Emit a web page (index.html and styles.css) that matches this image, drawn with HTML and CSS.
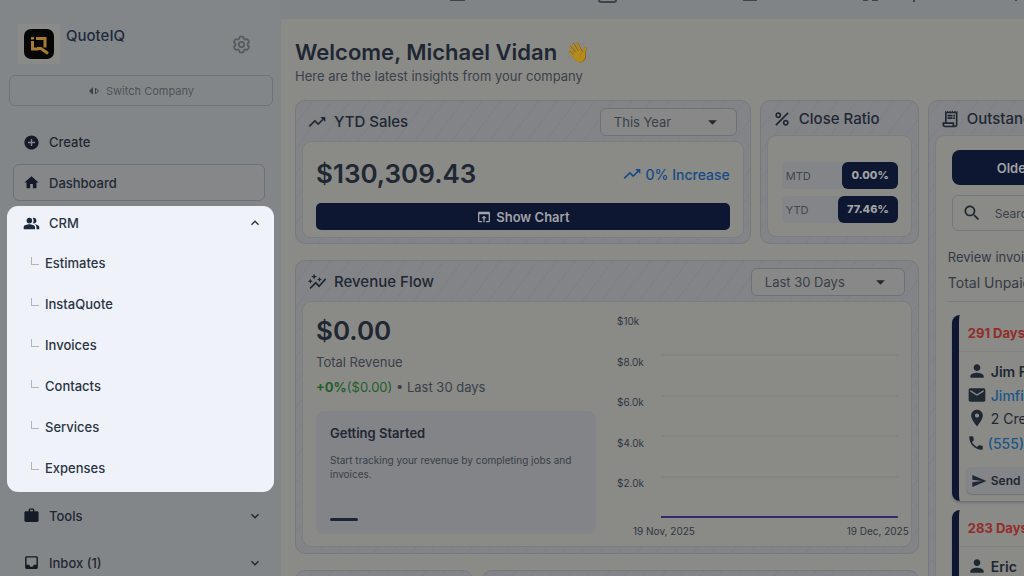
FILE: index.html
```html
<!DOCTYPE html>
<html lang="en">
<head>
  <meta charset="UTF-8" />
  <meta name="viewport" content="width=device-width, initial-scale=1" />
  <title>QuoteIQ - Dashboard</title>
  <link rel="stylesheet" href="styles.css">
</head>
<body>

  <!-- shared icons -->
  <svg class="sprite" aria-hidden="true">
    <symbol id="i-trend" viewBox="0 0 24 24"><path d="M16 6l2.29 2.29-4.88 4.88-4-4L2 16.59 3.41 18l6-6 4 4 6.3-6.29L22 12V6z"/></symbol>
    <symbol id="i-down" viewBox="0 0 24 24"><path d="M16.59 8.59L12 13.17 7.41 8.59 6 10l6 6 6-6z"/></symbol>
    <symbol id="i-caret" viewBox="0 0 24 24"><path d="M4 8l8 8 8-8z"/></symbol>
    <symbol id="i-person" viewBox="0 0 24 24"><path d="M12 12c2.21 0 4-1.79 4-4s-1.79-4-4-4-4 1.79-4 4 1.79 4 4 4zm0 2c-2.67 0-8 1.34-8 4v2h16v-2c0-2.66-5.33-4-8-4z"/></symbol>
  </svg>

  <div class="app">

    <aside class="sidebar">
      <div class="company">
        <div class="logo">
          <svg viewBox="0 0 30 30">
            <rect width="30" height="30" rx="7" fill="#060606"/>
            <g fill="none" stroke="#a67b32" stroke-width="3">
              <path d="M8.5 12v8h6"/>
              <path d="M12 9.500h9v9"/>
              <path d="M13 19.500h4l7 5"/>
            </g>
            <path d="M7 8h3v2.500H7z" fill="#a67b32"/>
          </svg>
        </div>
        <span class="company-name">QuoteIQ</span>
        <button class="settings-btn" title="Settings">
          <svg viewBox="0 0 24 24"><path d="M9.594 3.94c.09-.542.56-.94 1.11-.94h2.593c.55 0 1.02.398 1.11.94l.213 1.281c.063.374.313.686.645.87.074.04.147.083.22.127.324.196.72.257 1.075.124l1.217-.456a1.125 1.125 0 011.37.49l1.296 2.247a1.125 1.125 0 01-.26 1.431l-1.003.827c-.293.24-.438.613-.431.992a6.759 6.759 0 010 .255c-.007.378.138.75.43.99l1.005.828c.424.35.534.954.26 1.43l-1.298 2.247a1.125 1.125 0 01-1.369.491l-1.217-.456c-.355-.133-.75-.072-1.076.124a6.57 6.57 0 01-.22.128c-.331.183-.581.495-.644.869l-.213 1.28c-.09.543-.56.941-1.11.941h-2.594c-.55 0-1.02-.398-1.11-.94l-.213-1.281c-.062-.374-.312-.686-.644-.87a6.52 6.52 0 01-.22-.127c-.325-.196-.72-.257-1.076-.124l-1.217.456a1.125 1.125 0 01-1.369-.49l-1.297-2.247a1.125 1.125 0 01.26-1.431l1.004-.827c.292-.24.437-.613.43-.992a6.932 6.932 0 010-.255c.007-.378-.138-.75-.43-.99l-1.004-.828a1.125 1.125 0 01-.26-1.43l1.297-2.247a1.125 1.125 0 011.37-.491l1.216.456c.356.133.751.072 1.076-.124.072-.044.146-.087.22-.128.332-.183.582-.495.644-.869l.214-1.281z"/><circle cx="12" cy="12" r="3"/></svg>
        </button>
      </div>

      <button class="switch-btn">
        <svg viewBox="0 0 12 10"><path d="M5 1v8L1 5z" fill="currentColor"/><path d="M7.500 2v6l3-3z" fill="none" stroke="currentColor"/></svg>
        Switch Company
      </button>

      <nav>
        <a href="#" class="nav-item create">
          <svg class="icon" viewBox="0 0 24 24"><path d="M12 2C6.48 2 2 6.48 2 12s4.480 10 10 10 10-4.480 10-10S17.520 2 12 2zm5 11h-4v4h-2v-4H7v-2h4V7h2v4h4v2z"/></svg>
          Create
        </a>
        <a href="#" class="nav-item active">
          <svg class="icon" viewBox="0 0 24 24"><path d="M10 20v-6h4v6h5v-8h3L12 3 2 12h3v8z"/></svg>
          Dashboard
        </a>

        <div class="nav-group">
          <button class="nav-item group-title">
            <svg class="icon" viewBox="0 0 24 24"><path d="M16.670 13.130C18.040 14.060 19 15.320 19 17v3h4v-3c0-2.180-3.570-3.470-6.330-3.870zM15 12c2.210 0 4-1.790 4-4s-1.790-4-4-4c-.47 0-.91.1-1.330.24C14.500 5.270 15 6.580 15 8s-.5 2.730-1.330 3.760c.42.14.86.24 1.330.24zM9 12c2.210 0 4-1.790 4-4s-1.790-4-4-4-4 1.790-4 4 1.790 4 4 4zm0 1c-2.670 0-8 1.340-8 4v3h16v-3c0-2.660-5.330-4-8-4z"/></svg>
            CRM
            <svg class="chevron" viewBox="0 0 24 24"><path d="M12 8l-6 6 1.410 1.410L12 10.830l4.590 4.580L18 14z"/></svg>
          </button>
          <ul>
            <li><a href="#">Estimates</a></li>
            <li><a href="#">InstaQuote</a></li>
            <li><a href="#">Invoices</a></li>
            <li><a href="#">Contacts</a></li>
            <li><a href="#">Services</a></li>
            <li><a href="#">Expenses</a></li>
          </ul>
        </div>

        <button class="nav-item closed">
          <svg class="icon" viewBox="0 0 24 24"><path d="M20 6h-4V4c0-1.110-.89-2-2-2h-4c-1.110 0-2 .89-2 2v2H4c-1.110 0-1.990.89-1.990 2L2 19c0 1.110.89 2 2 2h16c1.110 0 2-.89 2-2V8c0-1.110-.89-2-2-2zm-6 0h-4V4h4v2z"/></svg>
          Tools
          <svg class="chevron"><use href="#i-down"/></svg>
        </button>
        <button class="nav-item closed">
          <svg class="icon" viewBox="0 0 24 24"><path d="M19 3H5c-1.100 0-2 .9-2 2v14c0 1.100.9 2 2 2h14c1.100 0 2-.9 2-2V5c0-1.100-.9-2-2-2zm0 12h-4c0 1.660-1.350 3-3 3s-3-1.340-3-3H5V5h14v10z"/></svg>
          Inbox (1)
          <svg class="chevron"><use href="#i-down"/></svg>
        </button>
      </nav>
    </aside>

    <main>
      <header class="topbar">
        <svg viewBox="0 0 742 19" width="742" height="19">
          <path d="M169 0h15M462 0h14M582 0h5M591 0h6M633 0v2M735 0v1" />
          <path d="M318 -4v4q0 2 2 2h13q2 0 2-2v-4" />
        </svg>
      </header>

      <div class="content">
        <h1>Welcome, Michael Vidan <span class="wave">👋</span></h1>
        <p class="intro">Here are the latest insights from your company</p>

        <div class="board">
          <div class="left">
            <section class="card sales">
              <div class="card-head tall">
                <svg class="head-icon"><use href="#i-trend"/></svg>
                <h2>YTD Sales</h2>
                <div class="select">
                  <select aria-label="Sales period"><option>This Year</option></select>
                  <svg><use href="#i-caret"/></svg>
                </div>
              </div>
              <div class="card-body">
                <div class="sales-row">
                  <strong class="amount">$130,309.43</strong>
                  <span class="increase"><svg><use href="#i-trend"/></svg>0% Increase</span>
                </div>
                <button class="show-chart">
                  <svg viewBox="0 0 24 24"><path d="M19 4H5c-1.110 0-2 .9-2 2v12c0 1.100.89 2 2 2h4v-2H5V8h14v10h-4v2h4c1.100 0 2-.9 2-2V6c0-1.100-.89-2-2-2zm-7 6l-4 4h3v6h2v-6h3l-4-4z"/></svg>
                  Show Chart
                </button>
              </div>
            </section>

            <section class="card ratio">
              <div class="card-head">
                <svg class="head-icon" viewBox="0 0 24 24"><path d="M7.500 11C9.430 11 11 9.430 11 7.500S9.430 4 7.500 4 4 5.570 4 7.500 5.570 11 7.500 11zm0-5C8.330 6 9 6.670 9 7.500S8.330 9 7.500 9 6 8.330 6 7.500 6.670 6 7.500 6zM4 18.580L18.580 4 20 5.420 5.420 20zM16.500 13c-1.930 0-3.500 1.570-3.500 3.500s1.570 3.500 3.500 3.500 3.500-1.570 3.500-3.500-1.570-3.500-3.500-3.500zm0 5c-.83 0-1.500-.67-1.500-1.500s.67-1.500 1.500-1.500 1.500.67 1.500 1.500-.67 1.500-1.500 1.500z"/></svg>
                <h2>Close Ratio</h2>
              </div>
              <div class="card-body">
                <div class="ratio-row"><span>MTD</span><b>0.00%</b></div>
                <div class="ratio-row"><span>YTD</span><b>77.46%</b></div>
              </div>
            </section>

            <section class="card revenue">
              <div class="card-head tall">
                <svg class="head-icon" viewBox="0 0 24 24"><path d="M14.060 9.940L12 9l2.060-.94L15 6l.94 2.060L18 9l-2.060.94L15 12l-.94-2.060zM4 14l.94-2.060L7 11l-2.060-.94L4 8l-.94 2.060L1 11l2.060.94L4 14zm4.500-5l1.090-2.410L12 5.500 9.590 4.410 8.500 2 7.410 4.410 5 5.500l2.410 1.090L8.500 9zm-4 11.500l6-6.010 4 4L23 8.930l-1.410-1.410-7.090 7.970-4-4L3 19l1.500 1.500z"/></svg>
                <h2>Revenue Flow</h2>
                <div class="select wide">
                  <select aria-label="Revenue period"><option>Last 30 Days</option></select>
                  <svg><use href="#i-caret"/></svg>
                </div>
              </div>
              <div class="card-body">
                <div class="totals">
                  <strong class="amount">$0.00</strong>
                  <p>Total Revenue</p>
                  <p class="change"><span><b>+0%</b>($0.00)</span> • Last 30 days</p>
                  <div class="started">
                    <h3>Getting Started</h3>
                    <p>Start tracking your revenue by completing jobs and invoices.</p>
                    <i></i>
                  </div>
                </div>
                <div class="chart">
                  <div class="y-axis"><span>$10k</span><span>$8.0k</span><span>$6.0k</span><span>$4.0k</span><span>$2.0k</span></div>
                  <svg class="plot">
                    <g class="grid-lines">
                      <line x1="0" x2="100%" y1="40" y2="40"/>
                      <line x1="0" x2="100%" y1="81" y2="81"/>
                      <line x1="0" x2="100%" y1="121" y2="121"/>
                      <line x1="0" x2="100%" y1="162" y2="162"/>
                    </g>
                    <line class="series" x1="0" x2="100%" y1="202" y2="202"/>
                  </svg>
                  <div class="x-axis"><span>19 Nov, 2025</span><span>19 Dec, 2025</span></div>
                </div>
              </div>
            </section>

            <div class="next-row">
              <section class="card"></section>
              <section class="card"></section>
            </div>
          </div>

          <section class="card outstanding">
            <div class="card-head">
              <svg class="head-icon" viewBox="0 0 24 24"><path d="M19.500 3.500L18 2l-1.500 1.500L15 2l-1.500 1.500L12 2l-1.500 1.500L9 2 7.500 3.500 6 2v14H3v3c0 1.660 1.340 3 3 3h12c1.660 0 3-1.340 3-3V2l-1.500 1.500zM15 20H6c-.55 0-1-.45-1-1v-1h10v2zm4-1c0 .55-.45 1-1 1s-1-.45-1-1v-3H8V5h11v14zM9 7h6v2H9zM16 7h2v2h-2zM9 10h6v2H9zM16 10h2v2h-2z"/></svg>
              <h2>Outstanding</h2>
            </div>
            <div class="card-body">
              <button class="sort-btn">Oldest First</button>
              <label class="search">
                <svg viewBox="0 0 24 24"><path d="M15.500 14h-.79l-.28-.27C15.410 12.590 16 11.110 16 9.500 16 5.910 13.090 3 9.500 3S3 5.910 3 9.500 5.910 16 9.500 16c1.610 0 3.090-.59 4.230-1.570l.27.28v.79l5 4.990L20.490 19l-4.990-5zm-6 0C7.010 14 5 11.990 5 9.500S7.010 5 9.500 5 14 7.010 14 9.500 11.990 14 9.500 14z"/></svg>
                <input type="text" placeholder="Search" aria-label="Search">
              </label>
              <p class="review">Review invoices</p>
              <p class="unpaid">Total Unpaid</p>

              <article class="invoice">
                <h3>291 Days</h3>
                <div class="customer">
                  <p class="name"><svg><use href="#i-person"/></svg>Jim Fish</p>
                  <p class="mail"><svg viewBox="0 0 24 24"><path d="M20 4H4c-1.100 0-2 .9-2 2v12c0 1.100.9 2 2 2h16c1.100 0 2-.9 2-2V6c0-1.100-.9-2-2-2zm0 4l-8 5-8-5V6l8 5 8-5v2z"/></svg><a href="#">Jimfish</a></p>
                  <p class="address"><svg viewBox="0 0 24 24"><path d="M12 2C8.130 2 5 5.130 5 9c0 5.250 7 13 7 13s7-7.750 7-13c0-3.870-3.130-7-7-7zm0 9.500c-1.380 0-2.500-1.120-2.500-2.500s1.120-2.500 2.500-2.500 2.500 1.120 2.500 2.500-1.120 2.500-2.500 2.500z"/></svg>2 Creek</p>
                  <p class="phone"><svg viewBox="0 0 24 24"><path d="M20 15.500c-1.250 0-2.450-.2-3.570-.57-.35-.11-.74-.03-1.020.24l-2.200 2.200c-2.830-1.440-5.150-3.750-6.590-6.590l2.200-2.210c.28-.26.36-.65.25-1C8.700 6.450 8.500 5.250 8.500 4c0-.55-.45-1-1-1H4c-.55 0-1 .45-1 1 0 9.390 7.610 17 17 17 .55 0 1-.45 1-1v-3.500c0-.55-.45-1-1-1z"/></svg><a href="#">(555)</a></p>
                </div>
                <button class="send-btn"><svg viewBox="0 0 24 24"><path d="M2 21L23 12 2 3v7l15 2-15 2z"/></svg>Send Reminder</button>
              </article>

              <article class="invoice">
                <h3>283 Days</h3>
                <div class="customer">
                  <p class="name"><svg><use href="#i-person"/></svg>Eric</p>
                </div>
              </article>
            </div>
          </section>
        </div>
      </div>
    </main>
  </div>

</body>
</html>
```
FILE: styles.css
```css
* {
  box-sizing: border-box;
}

body {
  margin: 0;
  height: 100vh;
  overflow: hidden;
  font-family: Inter, "Liberation Sans", sans-serif;
  font-size: 13px;
  color: #1f2733;
  background: #8a8a87;
}

h1, h2, h3, p, ul {
  margin: 0;
  padding: 0;
}

button, input, select {
  font: inherit;
  color: inherit;
  border: none;
  background: none;
  padding: 0;
  cursor: pointer;
}

a {
  color: inherit;
  text-decoration: none;
}

svg {
  display: block;
  flex-shrink: 0;
  fill: currentColor;
}

.sprite {
  display: none;
}

/* the board is wider than the window, the last column runs off it */
.app {
  display: flex;
  width: 120vw;
}

/* sidebar */
.sidebar {
  width: 281px;
  min-height: 100vh;
  flex-shrink: 0;
  padding: 24px 7px 0;
  background: #838688;
}

.company {
  display: flex;
  align-items: flex-start;
  padding: 0 22px 0 11px;
}

.logo {
  width: 42px;
  height: 40px;
  padding: 5px 6px;
  border-radius: 2px;
  background: #8a8a88;
}

.logo svg {
  width: 30px;
  height: 30px;
}

.company-name {
  margin-left: 6px;
  font-size: 15px;
  line-height: 24px;
  font-weight: 500;
  color: #202a3d;
}

.settings-btn {
  margin: 10px 0 0 auto;
  color: #555b62;
}

.settings-btn svg {
  width: 21px;
  height: 21px;
  fill: none;
  stroke: currentColor;
  stroke-width: 2;
}

.switch-btn {
  display: flex;
  align-items: center;
  justify-content: center;
  gap: 6px;
  width: 264px;
  height: 31px;
  margin: 11px 0 0 2px;
  border: 1px solid #6f7378;
  border-radius: 6px;
  font-size: 11px;
  color: #4d525a;
}

.switch-btn svg {
  width: 12px;
  height: 10px;
  color: #3c424b;
}

.nav-item {
  display: flex;
  align-items: center;
  gap: 9px;
  width: 100%;
  padding: 0 11px 0 16px;
  font-weight: 500;
}

.icon {
  width: 17px;
  height: 17px;
  color: #141b27;
}

.chevron {
  width: 16px;
  height: 16px;
  margin-left: auto;
}

.create {
  height: 36px;
  margin-top: 18px;
}

.active {
  width: 252px;
  height: 37px;
  margin: 4px 0 5px 6px;
  padding-left: 9px;
  border: 1px solid #6d6f7c;
  border-radius: 6px;
  background: #858789;
}

.nav-group {
  padding-bottom: 4px;
  border-radius: 11px;
  background: #eff3f9;
  color: #2a3442;
}

.nav-group .icon {
  color: #1e293b;
}

.group-title {
  height: 34px;
  margin-bottom: 2px;
}

.nav-group ul {
  list-style: none;
}

.nav-group li a {
  display: flex;
  align-items: center;
  gap: 6px;
  height: 41px;
  padding-left: 24px;
  font-weight: 500;
}

.nav-group li a::before {
  content: "";
  width: 7px;
  height: 7px;
  margin-bottom: 4px;
  border-left: 1px solid #b2b6bc;
  border-bottom: 1px solid #b2b6bc;
}

.nav-group,
.closed {
  width: 267px;
}

.closed {
  height: 47px;
}

/* main */
main {
  flex: 1;
  min-width: 0;
}

.topbar {
  height: 19px;
  overflow: hidden;
  background: #808486;
}

.topbar svg {
  fill: none;
  stroke: #3e444d;
  stroke-width: 2;
}

.content {
  padding: 19px 14px 0;
}

h1 {
  display: flex;
  align-items: center;
  gap: 8px;
  font-size: 22px;
  line-height: 28px;
  font-weight: 600;
}

.wave {
  font-size: 20px;
  filter: brightness(0.7);
}

.intro {
  margin-bottom: 14px;
  font-size: 13px;
  line-height: 20px;
  color: #3a414b;
}

.board {
  display: grid;
  grid-template-columns: minmax(0, 1fr) 287px;
  gap: 9px;
}

.left {
  display: grid;
  grid-template-columns: minmax(0, 1fr) 159px;
  gap: 16px 9px;
  align-content: start;
}

.card {
  display: flex;
  flex-direction: column;
  padding: 0 6px 6px;
  border: 1px solid #76787f;
  border-radius: 10px;
  background: repeating-linear-gradient(-53deg, #828487 0 14px, #7d8084 14px 15px);
}

.card-head {
  display: flex;
  flex-shrink: 0;
  align-items: center;
  height: 34px;
  padding: 2px 7px 0 5px;
}

.card-head.tall {
  height: 40px;
}

.head-icon {
  width: 20px;
  height: 20px;
  margin-right: 7px;
}

h2 {
  font-size: 15px;
  line-height: 20px;
  font-weight: 500;
  white-space: nowrap;
}

.card-body {
  flex: 1;
  border: 1px solid #7c7d81;
  border-radius: 9px;
  background: #8a8a87;
}

.select {
  position: relative;
  width: 137px;
  margin-left: auto;
}

.select.wide {
  width: 154px;
}

.select select {
  display: block;
  width: 100%;
  height: 28px;
  padding-left: 13px;
  border: 1px solid #6d7077;
  border-radius: 6px;
  appearance: none;
  background: #878887;
  color: #39404a;
}

.select svg {
  position: absolute;
  top: 8px;
  right: 18px;
  width: 13px;
  height: 13px;
  color: #24282e;
  pointer-events: none;
}

.sales,
.ratio {
  height: 144px;
}

.sales .card-body {
  padding: 13px 13px 7px;
}

.sales-row {
  display: flex;
  align-items: center;
  justify-content: space-between;
  height: 38px;
  margin-bottom: 10px;
}

.amount {
  font-size: 26px;
  line-height: 32px;
  font-weight: 600;
}

.increase {
  display: flex;
  align-items: center;
  gap: 4px;
  font-size: 14px;
  font-weight: 500;
  color: #174a85;
}

.increase svg {
  width: 20px;
  height: 20px;
}

.show-chart {
  display: flex;
  align-items: center;
  justify-content: center;
  gap: 4px;
  width: 100%;
  height: 27px;
  border-radius: 5px;
  background: #0e1731;
  color: #a1a3a6;
  font-weight: 600;
}

.show-chart svg {
  width: 16px;
  height: 16px;
}

.ratio .card-body {
  padding: 26px 13px 0 14px;
}

.ratio-row {
  display: flex;
  align-items: center;
  justify-content: space-between;
  height: 27px;
  margin-bottom: 7px;
  padding-left: 4px;
  border-radius: 6px;
  background: #838588;
  font-size: 11px;
  color: #414750;
}

.ratio-row b {
  padding: 0 9px;
  border-radius: 6px;
  background: #0e1731;
  color: #a1a3a6;
  font-weight: 800;
  line-height: 27px;
}

.revenue {
  grid-column: 1 / -1;
  height: 294px;
}

.revenue .card-body {
  display: flex;
  gap: 21px;
  padding: 13px 2px 0 13px;
}

.totals {
  width: 280px;
  line-height: 20px;
  color: #39404a;
}

.totals .amount {
  display: block;
  margin-bottom: 5px;
  color: #1f2733;
}

.change {
  margin-top: 5px;
}

.change span {
  color: #235f2a;
}

.started {
  height: 123px;
  margin-top: 14px;
  padding: 11px 14px;
  border-radius: 8px;
  background: #828487;
}

.started h3 {
  font-size: 13px;
  line-height: 22px;
  font-weight: 600;
  color: #1f2733;
}

.started p {
  margin: 9px 0 37px;
  font-size: 10px;
  line-height: 14px;
}

.started i {
  display: block;
  width: 28px;
  height: 3px;
  border-radius: 2px;
  background: #1c2534;
}

.chart {
  flex: 1;
  display: grid;
  grid-template-columns: 44px minmax(0, 1fr);
  grid-template-rows: 204px 20px;
  font-size: 10px;
  line-height: 12px;
  color: #2e3641;
}

.y-axis {
  display: flex;
  flex-direction: column;
  justify-content: space-between;
  height: 174px;
}

.plot {
  width: calc(100% - 11px);
  height: 204px;
}

.grid-lines {
  stroke: #7e7f7e;
}

.series {
  stroke: #35286e;
  stroke-width: 2;
}

.x-axis {
  grid-column: 1 / -1;
  display: flex;
  justify-content: space-between;
  padding: 6px 0 0 16px;
}

.next-row {
  grid-column: 1 / -1;
  display: grid;
  grid-template-columns: 178px minmax(0, 1fr);
  gap: 9px;
}

.next-row .card {
  height: 140px;
}

/* outstanding invoices */
.outstanding .card-body {
  padding: 14px 0 0 16px;
}

.sort-btn {
  width: 162px;
  height: 35px;
  border-radius: 8px;
  background: #0e1731;
  color: #a1a3a6;
  font-weight: 600;
}

.search {
  display: flex;
  align-items: center;
  gap: 13px;
  height: 36px;
  margin: 10px 14px 0 0;
  padding-left: 9px;
  border: 1px solid #74777b;
  border-radius: 6px;
}

.search svg {
  width: 20px;
  height: 20px;
}

.search input {
  min-width: 0;
  font-size: 12px;
}

.search input::placeholder {
  color: #39404a;
  opacity: 1;
}

.review,
.unpaid {
  margin-left: -4px;
  color: #333a44;
}

.review {
  margin-top: 16px;
  line-height: 20px;
}

.unpaid {
  margin-bottom: 13px;
  padding: 4px 0 6px;
  border-bottom: 1px solid #7a7c7e;
  font-size: 14px;
  line-height: 24px;
}

.invoice {
  margin: 0 14px 9px 0;
  padding: 0 0 7px 8px;
  border-left: 7px solid #0e1731;
  border-radius: 8px;
  box-shadow: 0 2px 2px #707275;
}

.invoice h3 {
  height: 37px;
  margin-left: -8px;
  padding-left: 9px;
  border-bottom: 1px solid #808180;
  font-size: 13px;
  line-height: 36px;
  font-weight: 700;
  color: #932c2b;
}

.customer {
  padding-top: 7px;
}

.customer p {
  display: flex;
  align-items: center;
  gap: 4px;
  height: 24px;
  font-size: 14px;
}

.customer svg {
  width: 20px;
  height: 20px;
}

.customer .name {
  font-weight: 600;
}

.customer .address {
  height: 22px;
}

.customer a {
  font-weight: 500;
  color: #1a5689;
}

.customer .phone {
  height: 28px;
  gap: 3px;
}

.customer .phone svg {
  width: 18px;
  height: 18px;
}

.send-btn {
  display: flex;
  align-items: center;
  gap: 4px;
  height: 27px;
  margin: 10px 0 0 -1px;
  padding: 0 12px 0 5px;
  border-radius: 6px;
  background: #838588;
  box-shadow: 0 1px 1px #6f7174;
  font-size: 12px;
  font-weight: 600;
}

.send-btn svg {
  width: 16px;
  height: 16px;
}
```
